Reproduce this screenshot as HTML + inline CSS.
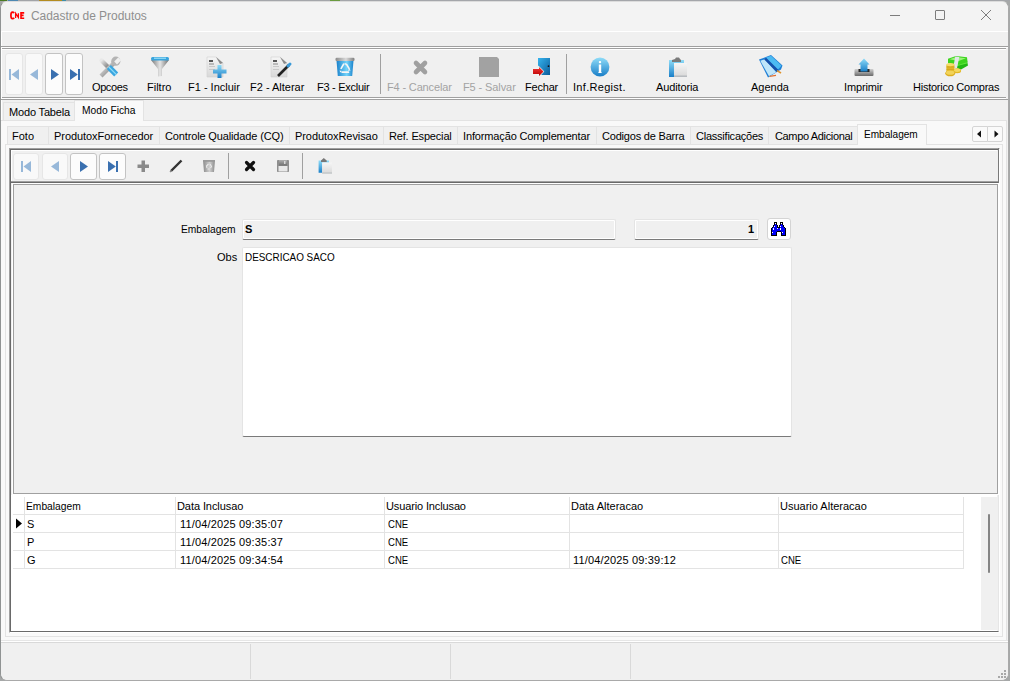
<!DOCTYPE html>
<html><head><meta charset="utf-8">
<style>
*{margin:0;padding:0;box-sizing:border-box}
html,body{width:1010px;height:681px;overflow:hidden}
body{position:relative;background:#a6a8a8;font-family:"Liberation Sans",sans-serif;font-size:11px;color:#000}
.a{position:absolute}
.t{position:absolute;white-space:nowrap;line-height:13px}
.hl{position:absolute;height:1px}
.vl{position:absolute;width:1px}
.g{color:#a3a3a3}
</style></head><body>
<!-- desktop strip -->
<div class="a" style="left:0;top:0;width:1010px;height:1px;background:linear-gradient(90deg,#4a7a22 0,#4a7a22 7px,#a0a8a0 7px,#a0a8a0 8px,#4d88b2 8px,#4d88b2 18px,#a2a4a8 18px,#a2a4a8 39px,#b48c20 39px,#b48c20 62px,#3e8fa8 62px,#3e8fa8 66px,#a4a6aa 66px,#a4a6aa 330px,#6a9a40 330px,#6a9a40 340px,#a4a6aa 340px,#a4a6aa 1010px)"></div>
<!-- window -->
<div id="win" class="a" style="left:0;top:1px;width:1009px;height:680px;background:#f0f0f0;border:1px solid #a9a9a9;border-left-color:#909393;border-top-color:#dcdcdc;border-radius:7px;overflow:hidden">
</div>
<!-- title bar -->
<div class="a" style="left:1px;top:2px;width:1007px;height:29px;background:#f3f3f3;border-radius:6px 6px 0 0"></div>
<div class="hl" style="left:1px;top:31px;width:1007px;background:#fff"></div>
<!-- logo -->
<svg class="a" style="left:0;top:0.5px" width="30" height="24" viewBox="0 0 30 24">
<path d="M14.2 12 Q13.5 11.2 12.5 11.2 Q10.9 11.3 10.9 14.4 Q10.9 17.5 12.5 17.7 Q13.5 17.7 14.2 16.9" fill="none" stroke="#f00" stroke-width="1.7"/>
<path d="M15.6 16.9 V12.4 L18.4 16.4 V12.2" fill="none" stroke="#f00" stroke-width="1.3"/>
<path d="M24.2 11.9 H21 V17.2 H24.2 M21 14.4 H23.6" fill="none" stroke="#f00" stroke-width="1.6"/>
</svg>
<div class="t" style="left:31px;top:9px;font-size:12px;line-height:15px;color:#8f8f8f;letter-spacing:-0.05px">Cadastro de Produtos</div>
<!-- caption buttons -->
<div class="hl" style="left:890px;top:15px;width:10px;background:#7c7c7c"></div>
<div class="a" style="left:935px;top:10px;width:10px;height:10px;border:1px solid #7c7c7c;border-radius:1px"></div>
<svg class="a" style="left:980px;top:9px" width="12" height="12" viewBox="0 0 12 12"><path d="M1 1 L11 11 M11 1 L1 11" stroke="#7c7c7c" stroke-width="1"/></svg>

<!-- menu/toolbar separators -->
<div class="vl" style="left:1px;top:32px;height:641px;background:#fff"></div>
<div class="hl" style="left:1px;top:46px;width:1007px;background:#a0a0a0"></div>
<div class="hl" style="left:1px;top:47px;width:1007px;background:#fff"></div>
<div class="hl" style="left:2px;top:48px;width:1004px;background:#a0a0a0"></div>
<div class="hl" style="left:2px;top:49px;width:1004px;background:#fff"></div>

<div class="hl" style="left:2px;top:97px;width:1004px;background:#a0a0a0"></div>
<div class="hl" style="left:2px;top:98px;width:1004px;background:#fff"></div>
<div class="hl" style="left:1px;top:99px;width:1007px;background:#a0a0a0"></div>


<!-- nav buttons -->
<div class="a" style="left:5px;top:53px;width:18px;height:42px;border:1px solid #e6e6e6;border-radius:3px;background:#f9f9f9"></div>
<div class="a" style="left:25px;top:53px;width:18px;height:42px;border:1px solid #e6e6e6;border-radius:3px;background:#f9f9f9"></div>
<div class="a" style="left:45px;top:53px;width:18px;height:42px;border:1px solid #c3c3c3;border-radius:3px;background:#fcfcfc"></div>
<div class="a" style="left:65px;top:53px;width:18px;height:42px;border:1px solid #c3c3c3;border-radius:3px;background:#fcfcfc"></div>
<svg class="a" style="left:0;top:60px" width="90" height="30" viewBox="0 60 90 30">
<rect x="9" y="69" width="2" height="11" fill="#97b8d9"/>
<path d="M11.5 74.5 L19 69 V80 Z" fill="#97b8d9"/>
<path d="M30 74.5 L38 69 V80 Z" fill="#97b8d9"/>
<path d="M59 74.5 L51 69 V80 Z" fill="#3a70b0"/>
<path d="M77.8 74.5 L70 69 V80 Z" fill="#3a70b0"/>
<rect x="78" y="69" width="2" height="11" fill="#3a70b0"/>
</svg>
<!-- toolbar icons -->
<svg class="a" style="left:0;top:50px" width="1010" height="30" viewBox="0 50 1010 30">
<defs>
<linearGradient id="gmetal" x1="0" y1="0" x2="1" y2="1"><stop offset="0" stop-color="#e8e8e8"/><stop offset="1" stop-color="#7a7a7a"/></linearGradient>
<linearGradient id="gblue" x1="0" y1="0" x2="0" y2="1"><stop offset="0" stop-color="#8fdcf8"/><stop offset="1" stop-color="#1a7fc8"/></linearGradient>
<linearGradient id="gblue2" x1="0" y1="0" x2="1" y2="1"><stop offset="0" stop-color="#35b4ee"/><stop offset="1" stop-color="#0b5b9a"/></linearGradient>
<linearGradient id="gcone" x1="0" y1="0" x2="1" y2="0"><stop offset="0" stop-color="#777"/><stop offset="0.5" stop-color="#e6e6e6"/><stop offset="1" stop-color="#6e6e6e"/></linearGradient>
<linearGradient id="gpaper" x1="0" y1="0" x2="0" y2="1"><stop offset="0" stop-color="#f6f6f6"/><stop offset="1" stop-color="#d8d8d8"/></linearGradient>
<linearGradient id="gred" x1="0" y1="0" x2="0" y2="1"><stop offset="0" stop-color="#f43a3a"/><stop offset="1" stop-color="#b80000"/></linearGradient>
<linearGradient id="ggreen" x1="0" y1="0" x2="0" y2="1"><stop offset="0" stop-color="#7cf25a"/><stop offset="1" stop-color="#1a9a10"/></linearGradient>
<linearGradient id="ggold" x1="0" y1="0" x2="0" y2="1"><stop offset="0" stop-color="#f8e070"/><stop offset="1" stop-color="#c08a10"/></linearGradient>
<linearGradient id="gtray" x1="0" y1="0" x2="0" y2="1"><stop offset="0" stop-color="#d0d0d0"/><stop offset="1" stop-color="#6a6a6a"/></linearGradient>
</defs>
<!-- Opcoes: wrench + screwdriver -->
<path d="M101.5 60.5 L108.5 67.5" stroke="url(#gmetal)" stroke-width="4.2" stroke-linecap="round"/>
<path d="M102.5 74.5 L113 64" stroke="url(#gmetal)" stroke-width="4.2" stroke-linecap="square"/>
<circle cx="115.8" cy="61.2" r="4.6" fill="#b4b4b4"/>
<path d="M114.2 61.6 L118.2 57.6 L121 60.4 L117 64.4 Z" fill="#f0f0f0"/>
<path d="M106.8 69 L110.8 65 L118.2 72.4 L114.2 76.4 Z" fill="#3aa6e0"/>
<path d="M108.8 67 L116.2 74.4" stroke="#8fdcf8" stroke-width="1.2"/>
<!-- Filtro funnel -->
<path d="M151 60 L169 60 L162 69 L162 76 L158 76.5 L158 69 Z" fill="url(#gcone)"/>
<rect x="151" y="57" width="18" height="3.5" rx="1.5" fill="#3aa4dc"/>
<rect x="154" y="57.6" width="12" height="1.2" fill="#9be2fa"/>
<!-- F1 doc + plus -->
<path d="M207 57 L216 57 L223 63 L223 77 L207 77 Z" fill="url(#gpaper)" stroke="#d0d0d0" stroke-width="0.6"/>
<path d="M216 57 L220 64 L223 63 Z" fill="#8a8a8a"/>
<rect x="209" y="60" width="4" height="2" fill="#555"/>
<rect x="209" y="63.5" width="5" height="1" fill="#888"/>
<rect x="209" y="66" width="6" height="1" fill="#c8c8c8"/><rect x="209" y="69" width="6" height="1" fill="#c8c8c8"/>
<path d="M217.5 65 H221.5 V69.5 H226.5 V73.5 H221.5 V78 H217.5 V73.5 H213 V69.5 H217.5 Z" fill="url(#gblue)"/>
<!-- F2 doc + pencil -->
<path d="M271 57 L280 57 L287 63 L287 77 L271 77 Z" fill="url(#gpaper)" stroke="#d0d0d0" stroke-width="0.6"/>
<path d="M280 57 L284 64 L287 63 Z" fill="#8a8a8a"/>
<rect x="273" y="60" width="4" height="2" fill="#555"/>
<rect x="273" y="63.5" width="5" height="1" fill="#888"/>
<rect x="273" y="66" width="6" height="1" fill="#c8c8c8"/><rect x="273" y="69" width="6" height="1" fill="#c8c8c8"/>
<path d="M278 76 L289 65" stroke="#222" stroke-width="2.6" stroke-linecap="butt"/>
<path d="M288 66 L290 64" stroke="#3a9ad8" stroke-width="3" stroke-linecap="round"/>
<!-- F3 recycle bin -->
<defs><linearGradient id="gbin" x1="0" y1="0" x2="1" y2="0"><stop offset="0" stop-color="#1a82cc"/><stop offset="0.6" stop-color="#74d4fa"/><stop offset="1" stop-color="#1a82cc"/></linearGradient>
<linearGradient id="glid" x1="0" y1="0" x2="1" y2="0"><stop offset="0" stop-color="#8a8a8a"/><stop offset="0.55" stop-color="#dadada"/><stop offset="1" stop-color="#7e7e7e"/></linearGradient></defs>
<path d="M336.5 60.5 L353.5 60.5 L352.2 76 L337.8 76 Z" fill="url(#gbin)"/>
<rect x="335.5" y="57.8" width="19" height="3.2" rx="1.2" fill="url(#glid)"/>
<g fill="none" stroke="#f6f6f6" stroke-width="1.7" stroke-linecap="round">
<path d="M343.6 64.2 L341.2 68.4"/><path d="M346.6 64.4 L349 68.4"/><path d="M348.4 72.2 L342.2 72.2"/>
</g>
<g fill="#f6f6f6"><path d="M346.4 63 L344.2 63.4 L345.3 65.6 Z"/><path d="M350.6 70.6 L349.2 68.6 L347.8 70.8 Z"/><path d="M339.6 70.6 L340.2 72.6 L342 71 Z"/></g>
<!-- F4 X gray -->
<path d="M416 63 L425 72 M425 63 L416 72" stroke="#a0a0a0" stroke-width="4.6" stroke-linecap="round"/>
<!-- F5 square -->
<path d="M479 57 L497 57 L499 59 L499 77 L479 77 Z" fill="#a2a2a2"/>
<!-- Fechar door -->
<path d="M538 58 L550 58 L550 75 L541 75 L544 71.5 L538 65.5 Z" fill="url(#gblue2)"/>
<circle cx="548.5" cy="66.2" r="0.9" fill="#111"/>
<path d="M533 69 L539 69 L539 67 L543.5 71.5 L539 76 L539 74 L533 74 Z" fill="url(#gred)" stroke="#f4f4f4" stroke-width="1.1" paint-order="stroke" stroke-linejoin="miter"/>
<!-- Inf circle -->
<circle cx="600" cy="67" r="9.4" fill="url(#gblue)"/>
<rect x="598.8" y="61" width="2.4" height="2.2" rx="1" fill="#fff"/>
<path d="M598.8 64.5 H601.2 V72.5 H602 V73 H598 V72.5 H598.8 Z" fill="#fff"/>
<!-- Auditoria clipboard -->
<path d="M669 60 L684 60 L684 63 L674 63 L674 77 L669 77 Z" fill="url(#gblue)"/>
<rect x="674" y="63" width="13" height="14" fill="url(#gpaper)"/>
<rect x="674" y="75.5" width="13" height="1.5" fill="#b8bcc0"/>
<path d="M672 62 L672 60 L675 59 L676 57.5 L679 57.5 L680 59 L681 60 L681 62 Z" fill="#7a7a7a"/>
<!-- Agenda book -->
<path d="M759 59.5 L771 55 L782.5 65.5 L781 69.5 L768 77.5 Z" fill="#1f7fd6"/>
<path d="M765.5 57.8 L771 55.8 L781.6 65.8 L777.5 70 Z" fill="#4cbaf2"/>
<path d="M760.3 60.8 L764.8 59.2 L776.3 72.3 L769 76.3 Z" fill="#bfe6fa"/>
<path d="M765.2 58.6 L777.6 71" stroke="#1650aa" stroke-width="2.6"/>
<path d="M777 70.6 L781 73" stroke="#e0922a" stroke-width="1.6"/>
<path d="M769.5 76.4 L776 75.4" stroke="#e07030" stroke-width="1.1"/>
<!-- Imprimir -->
<rect x="854.5" y="69" width="19" height="7" rx="1" fill="url(#gtray)"/>
<rect x="858.5" y="69" width="11" height="3" fill="#2a2a2a"/>
<path d="M864 58.5 L869.5 64.5 L867.5 64.5 L867.5 71.5 L860.5 71.5 L860.5 64.5 L858.5 64.5 Z" fill="url(#gblue)"/>
<!-- Historico compras -->
<path d="M955 62.5 L967 60.2 L968 65.5 L961 69.6 L954.5 67.5 Z" fill="#22b814"/>
<path d="M956 63 L966.5 61 L967 63.5 L957 66 Z" fill="#5ee83a"/>
<path d="M948 58.8 L956 56 L967 57.3 L967.5 62 L959 64.8 L948 63.2 Z" fill="#3cd41e"/>
<path d="M949.5 59.2 L956 57 L966 58.2 L958.5 61 Z" fill="#9af27a"/>
<path d="M955.3 56.4 L959.3 57 L957 68.2 L953.2 67.4 Z" fill="#e4e4ea"/>
<ellipse cx="950.4" cy="71.4" rx="4" ry="1.6" fill="#b08a12"/>
<rect x="946.4" y="64.6" width="8" height="6.8" fill="#e6bc2a"/>
<rect x="946.4" y="66.6" width="8" height="0.8" fill="#c89a18"/>
<rect x="946.4" y="68.8" width="8" height="0.8" fill="#c89a18"/>
<ellipse cx="950.4" cy="64.6" rx="4" ry="1.6" fill="#f6dc6a"/>
<ellipse cx="957.2" cy="70.8" rx="3.9" ry="2.5" fill="#e2b826"/>
<ellipse cx="957.2" cy="70.3" rx="3.2" ry="1.7" fill="#f4d860"/>
<ellipse cx="950.2" cy="73.3" rx="5" ry="3" fill="#dcae20"/>
<ellipse cx="950.2" cy="72.7" rx="4.2" ry="2.1" fill="#f2d35a"/>
</svg>
<!-- separators -->
<div class="vl" style="left:380px;top:54px;height:40px;background:#a0a0a0"></div>
<div class="vl" style="left:566px;top:54px;height:40px;background:#a0a0a0"></div>
<!-- labels -->
<div class="t" style="left:92px;top:81px;letter-spacing:-0.4px">Opcoes</div>
<div class="t" style="left:147px;top:81px">Filtro</div>
<div class="t" style="left:188px;top:81px">F1 - Incluir</div>
<div class="t" style="left:250px;top:81px">F2 - Alterar</div>
<div class="t" style="left:317px;top:81px;letter-spacing:-0.27px">F3 - Excluir</div>
<div class="t g" style="left:387px;top:81px;letter-spacing:-0.15px">F4 - Cancelar</div>
<div class="t g" style="left:463px;top:81px;letter-spacing:-0.1px">F5 - Salvar</div>
<div class="t" style="left:525px;top:81px;letter-spacing:-0.2px">Fechar</div>
<div class="t" style="left:573px;top:81px;letter-spacing:0.3px">Inf.Regist.</div>
<div class="t" style="left:656px;top:81px;letter-spacing:-0.12px">Auditoria</div>
<div class="t" style="left:751px;top:81px">Agenda</div>
<div class="t" style="left:844px;top:81px;letter-spacing:-0.14px">Imprimir</div>
<div class="t" style="left:913px;top:81px;letter-spacing:-0.25px">Historico Compras</div>


<!-- outer Modo page control -->
<div class="a" style="left:2px;top:100px;width:1006px;height:540px;background:#f0f0f0"></div>
<div class="a" style="left:1px;top:120px;width:1006px;height:521px;border-style:solid;border-width:1px 1px 1px 0;border-color:#e3e3e3;background:#f9f9f9"></div>
<div class="a" style="left:3px;top:102px;width:72px;height:19px;border:1px solid #e3e3e3;background:#f0f0f0"></div>
<div class="a" style="left:74px;top:100px;width:70px;height:21px;border:1px solid #e3e3e3;border-bottom:none;background:#f9f9f9"></div>
<!-- inner tab page body -->
<div class="a" style="left:5px;top:144px;width:998px;height:493px;border:1px solid #e3e3e3;background:#f9f9f9"></div>
<div class="t" style="left:9px;top:106px;letter-spacing:-0.16px">Modo Tabela</div>
<div class="t" style="left:82px;top:104px;transform:scaleX(0.931);transform-origin:0 0">Modo Ficha</div>
<!-- inner tabs -->
<div class="a" style="left:7px;top:126px;width:851px;height:19px;background:#f0f0f0;border:1px solid #e3e3e3"></div>
<div class="vl" style="left:48px;top:127px;height:18px;background:#e3e3e3"></div>
<div class="vl" style="left:159px;top:127px;height:18px;background:#e3e3e3"></div>
<div class="vl" style="left:289px;top:127px;height:18px;background:#e3e3e3"></div>
<div class="vl" style="left:383px;top:127px;height:18px;background:#e3e3e3"></div>
<div class="vl" style="left:457px;top:127px;height:18px;background:#e3e3e3"></div>
<div class="vl" style="left:596px;top:127px;height:18px;background:#e3e3e3"></div>
<div class="vl" style="left:690px;top:127px;height:18px;background:#e3e3e3"></div>
<div class="vl" style="left:768px;top:127px;height:18px;background:#e3e3e3"></div>
<div class="a" style="left:857px;top:124px;width:70px;height:21px;border:1px solid #e3e3e3;border-bottom:none;background:#f9f9f9"></div>
<div class="t" style="left:12px;top:130px">Foto</div>
<div class="t" style="left:54px;top:130px;letter-spacing:-0.06px">ProdutoxFornecedor</div>
<div class="t" style="left:165px;top:130px;letter-spacing:-0.14px">Controle Qualidade (CQ)</div>
<div class="t" style="left:295px;top:130px;letter-spacing:-0.07px">ProdutoxRevisao</div>
<div class="t" style="left:389px;top:130px;letter-spacing:-0.17px">Ref. Especial</div>
<div class="t" style="left:463px;top:130px;letter-spacing:-0.14px">Informação Complementar</div>
<div class="t" style="left:602px;top:130px;letter-spacing:-0.2px">Codigos de Barra</div>
<div class="t" style="left:696px;top:130px;letter-spacing:-0.23px">Classificações</div>
<div class="t" style="left:775px;top:130px;letter-spacing:-0.35px">Campo Adicional</div>
<div class="t" style="left:864px;top:128px;transform:scaleX(0.915);transform-origin:0 0">Embalagem</div>
<!-- scroll buttons -->
<div class="a" style="left:972px;top:126px;width:16px;height:16px;border:1px solid #d5d5d5;background:#fafafa;border-radius:2px 0 0 2px"></div>
<div class="a" style="left:987px;top:126px;width:16px;height:16px;border:1px solid #d5d5d5;background:#fafafa;border-radius:0 2px 2px 0"></div>
<svg class="a" style="left:972px;top:126px" width="32" height="16" viewBox="0 0 32 16"><path d="M5 8 L9 4.5 V11.5 Z M26.5 8 L22.5 4.5 V11.5 Z" fill="#111"/></svg>


<!-- outer frame -->
<div class="a" style="left:9px;top:148px;width:991px;height:485px;background:#f0f0f0;border-style:solid;border-width:1px;border-color:#a0a0a0 #fff #fff #a0a0a0"></div>
<div class="a" style="left:10px;top:149px;width:989px;height:483px;border-style:solid;border-width:1px;border-color:#696969 #e6e6e6 #696969 #696969"></div>
<div class="vl" style="left:998px;top:148px;height:35px;background:#7a7a7a"></div>
<!-- nav panel -->
<div class="hl" style="left:11px;top:150px;width:986px;background:#fff"></div>
<div class="vl" style="left:11px;top:150px;height:31px;background:#fff"></div>
<div class="hl" style="left:11px;top:181px;width:987px;background:#a0a0a0"></div>
<div class="hl" style="left:11px;top:182px;width:987px;background:#696969"></div>
<div class="a" style="left:13px;top:153px;width:26px;height:27px;border:1px solid #e6e6e6;border-radius:3px;background:#f9f9f9"></div>
<div class="a" style="left:42px;top:153px;width:26px;height:27px;border:1px solid #e6e6e6;border-radius:3px;background:#f9f9f9"></div>
<div class="a" style="left:70px;top:153px;width:27px;height:27px;border:1px solid #c3c3c3;border-radius:3px;background:#fcfcfc"></div>
<div class="a" style="left:99px;top:153px;width:27px;height:27px;border:1px solid #c3c3c3;border-radius:3px;background:#fcfcfc"></div>
<div class="vl" style="left:228px;top:153px;height:26px;background:#a0a0a0"></div>
<div class="vl" style="left:302px;top:153px;height:26px;background:#a0a0a0"></div>
<svg class="a" style="left:0;top:150px" width="340" height="32" viewBox="0 150 340 32">
<defs>
<linearGradient id="gb3" x1="0" y1="0" x2="0" y2="1"><stop offset="0" stop-color="#8fdcf8"/><stop offset="1" stop-color="#1a7fc8"/></linearGradient>
<linearGradient id="gp3" x1="0" y1="0" x2="0" y2="1"><stop offset="0" stop-color="#f6f6f6"/><stop offset="1" stop-color="#d8d8d8"/></linearGradient>
</defs>
<rect x="21" y="161" width="2" height="11" fill="#97b8d9"/>
<path d="M23.5 166.5 L31 161 V172 Z" fill="#97b8d9"/>
<path d="M51 166.5 L59 161 V172 Z" fill="#97b8d9"/>
<path d="M88 166.5 L80 161 V172 Z" fill="#3a70b0"/>
<path d="M115.8 166.5 L108 161 V172 Z" fill="#3a70b0"/>
<rect x="116" y="161" width="2" height="11" fill="#3a70b0"/>
<path d="M141.5 160.5 H145 V164.5 H149 V168 H145 V172 H141.5 V168 H137.5 V164.5 H141.5 Z" fill="#8a8a8a"/>
<path d="M171 171 L181.5 160.5" stroke="#333" stroke-width="2.4"/>
<path d="M170 172 L171.5 170.5" stroke="#888" stroke-width="1.5"/>
<defs><linearGradient id="gtr" x1="0" y1="0" x2="1" y2="0"><stop offset="0" stop-color="#8a8a8a"/><stop offset="0.55" stop-color="#d0d0d0"/><stop offset="1" stop-color="#8a8a8a"/></linearGradient>
<linearGradient id="gfl" x1="0" y1="0" x2="0" y2="1"><stop offset="0" stop-color="#b0b0b0"/><stop offset="1" stop-color="#707070"/></linearGradient></defs>
<path d="M203 160 H215 L214 172 H204 Z" fill="url(#gtr)"/>
<rect x="203" y="160" width="12" height="1.8" fill="#9a9a9a"/>
<path d="M207 168 L206.5 166 L208.5 164 M210 164 L211.5 166.5 L210.5 168 M209.5 169 L207.5 169" fill="none" stroke="#eaeaea" stroke-width="1.1"/>
<path d="M246.5 162.5 L253.5 169.5 M253.5 162.5 L246.5 169.5" stroke="#111" stroke-width="3.2" stroke-linecap="round"/>
<rect x="277" y="160" width="12" height="12" rx="0.8" fill="#8e8e8e"/>
<rect x="279" y="160" width="8" height="5.5" fill="url(#gfl)"/>
<rect x="284" y="161" width="1.5" height="3" fill="#d8d8d8"/>
<rect x="278.5" y="166" width="9" height="5.5" fill="#e8e8e8"/>
<path d="M318.6 160.5 L329 160.5 L329 162.6 L322.2 162.6 L322.2 172.8 L318.6 172.8 Z" fill="url(#gb3)"/>
<rect x="322.2" y="162.6" width="9.8" height="11" fill="url(#gp3)"/>
<rect x="322.2" y="172.4" width="9.8" height="1.2" fill="#bfc3c6"/>
<path d="M321 162 L321 160.6 L323.8 158 L326.7 160.6 L326.7 162 Z" fill="#777"/>
</svg>
<!-- form panel -->
<div class="a" style="left:12px;top:183px;width:987px;height:312px;border-style:solid;border-width:1px;border-color:#fff #fff #fff #fff"></div>
<div class="a" style="left:13px;top:184px;width:985px;height:310px;border-style:solid;border-width:1px;border-color:#a0a0a0 #a0a0a0 #a0a0a0 #a0a0a0;background:#f0f0f0"></div>
<div class="t" style="left:181px;top:223px;transform:scaleX(0.931);transform-origin:0 0">Embalagem</div>
<div class="a" style="left:242px;top:219px;width:374px;height:21px;background:#f0f0f0;border:1px solid #e4e4e4;border-bottom-color:#7a7a7a;border-radius:2px;box-shadow:inset 0 0 0 1px #fff"></div>
<div class="t" style="left:245px;top:223px;font-weight:bold">S</div>
<div class="a" style="left:634px;top:219px;width:125px;height:21px;background:#f0f0f0;border:1px solid #e4e4e4;border-bottom-color:#7a7a7a;border-radius:2px;box-shadow:inset 0 0 0 1px #fff"></div>
<div class="t" style="left:748px;top:223px;font-weight:bold">1</div>
<div class="a" style="left:767px;top:218px;width:24px;height:22px;border:1px solid #d4d4d4;border-radius:3px;background:#fff"></div>
<svg class="a" style="left:771px;top:222px;shape-rendering:crispEdges" width="15" height="14" viewBox="0 0 15 14">
<path d="M3,0 H6 V3 H7 V5 H8 V3 H9 V0 H12 V3 H13 V5 H14 V6 H15 V14 H10 V10 H6 V14 H0 V6 H1 V5 H2 V3 H3 Z" fill="#000"/>
<g fill="#0000f8"><rect x="4" y="1" width="1" height="2"/><rect x="10" y="1" width="1" height="2"/><rect x="3" y="3" width="3" height="2"/><rect x="9" y="3" width="3" height="2"/><rect x="2" y="5" width="4" height="1"/><rect x="9" y="5" width="4" height="1"/><rect x="1" y="6" width="13" height="3"/><rect x="1" y="9" width="5" height="1"/><rect x="10" y="9" width="4" height="1"/><rect x="1" y="10" width="4" height="3"/><rect x="11" y="10" width="3" height="3"/></g>
<g fill="#fff"><rect x="4" y="1" width="1" height="1"/><rect x="10" y="1" width="1" height="1"/><rect x="3" y="4" width="1" height="1"/><rect x="9" y="4" width="1" height="1"/><rect x="2" y="6" width="1" height="2"/><rect x="6" y="6" width="1" height="1"/><rect x="9" y="6" width="1" height="2"/><rect x="1" y="10" width="1" height="1"/><rect x="11" y="10" width="1" height="1"/></g>
</svg>
<div class="t" style="left:217px;top:251px">Obs</div>
<div class="a" style="left:242px;top:247px;width:550px;height:190px;background:#fff;border:1px solid #e4e4e4;border-bottom-color:#7a7a7a;border-radius:2px"></div>
<div class="t" style="left:245px;top:251px;transform:scaleX(0.9);transform-origin:0 0">DESCRICAO SACO</div>


<div class="a" style="left:11px;top:495px;width:986px;height:136px;background:#fff"></div>
<div class="hl" style="left:13px;top:514px;width:951px;background:#e3e3e3"></div>
<div class="hl" style="left:13px;top:532px;width:951px;background:#e3e3e3"></div>
<div class="hl" style="left:13px;top:550px;width:951px;background:#e3e3e3"></div>
<div class="hl" style="left:13px;top:568px;width:951px;background:#e3e3e3"></div>
<div class="vl" style="left:24px;top:497px;height:72px;background:#e3e3e3"></div>
<div class="vl" style="left:175px;top:497px;height:72px;background:#e3e3e3"></div>
<div class="vl" style="left:384px;top:497px;height:72px;background:#e3e3e3"></div>
<div class="vl" style="left:569px;top:497px;height:72px;background:#e3e3e3"></div>
<div class="vl" style="left:778px;top:497px;height:72px;background:#e3e3e3"></div>
<div class="vl" style="left:963px;top:497px;height:72px;background:#e3e3e3"></div>
<div class="a" style="left:981px;top:497px;width:17px;height:133px;background:#f0f0f0"></div>
<div class="a" style="left:988px;top:514px;width:2px;height:59px;background:#858585;border-radius:1px"></div>
<svg class="a" style="left:15px;top:517px" width="10" height="13" viewBox="0 0 10 13"><path d="M1 1.5 L7 6.5 L1 11.5 Z" fill="#000"/></svg>
<div class="t" style="left:26px;top:500px;transform:scaleX(0.932);transform-origin:0 0">Embalagem</div>
<div class="t" style="left:177px;top:500px;letter-spacing:-0.08px">Data Inclusao</div>
<div class="t" style="left:386px;top:500px;letter-spacing:-0.13px">Usuario Inclusao</div>
<div class="t" style="left:571px;top:500px">Data Alteracao</div>
<div class="t" style="left:780px;top:500px">Usuario Alteracao</div>
<div class="t" style="left:27px;top:518px">S</div>
<div class="t" style="left:180px;top:518px;letter-spacing:0.16px">11/04/2025 09:35:07</div>
<div class="t" style="left:388px;top:518px;transform:scaleX(0.87);transform-origin:0 0">CNE</div>
<div class="t" style="left:27px;top:536px">P</div>
<div class="t" style="left:180px;top:536px;letter-spacing:0.16px">11/04/2025 09:35:37</div>
<div class="t" style="left:388px;top:536px;transform:scaleX(0.87);transform-origin:0 0">CNE</div>
<div class="t" style="left:27px;top:554px">G</div>
<div class="t" style="left:180px;top:554px;letter-spacing:0.16px">11/04/2025 09:34:54</div>
<div class="t" style="left:388px;top:554px;transform:scaleX(0.87);transform-origin:0 0">CNE</div>
<div class="t" style="left:573px;top:554px;letter-spacing:0.16px">11/04/2025 09:39:12</div>
<div class="t" style="left:781px;top:554px;transform:scaleX(0.87);transform-origin:0 0">CNE</div>


<div class="hl" style="left:1px;top:640px;width:1007px;background:#e6e6e6"></div>
<div class="hl" style="left:1px;top:641px;width:1007px;background:#fff"></div>
<div class="hl" style="left:1px;top:642px;width:1007px;background:#d9d9d9"></div>
<div class="a" style="left:1px;top:643px;width:1007px;height:37px;background:#f0f0f0;border-radius:0 0 7px 7px"></div>
<div class="vl" style="left:250px;top:644px;height:35px;background:#d9d9d9"></div>
<div class="vl" style="left:450px;top:644px;height:35px;background:#d9d9d9"></div>
<div class="vl" style="left:630px;top:644px;height:35px;background:#d9d9d9"></div>
<svg class="a" style="left:996px;top:668px" width="12" height="12" viewBox="0 0 12 12">
<rect x="8" y="2" width="2" height="2" fill="#a8a8a8"/><rect x="5" y="5" width="2" height="2" fill="#a8a8a8"/><rect x="8" y="5" width="2" height="2" fill="#a8a8a8"/>
<rect x="2" y="8" width="2" height="2" fill="#a8a8a8"/><rect x="5" y="8" width="2" height="2" fill="#a8a8a8"/><rect x="8" y="8" width="2" height="2" fill="#a8a8a8"/>
</svg>

</body></html>
